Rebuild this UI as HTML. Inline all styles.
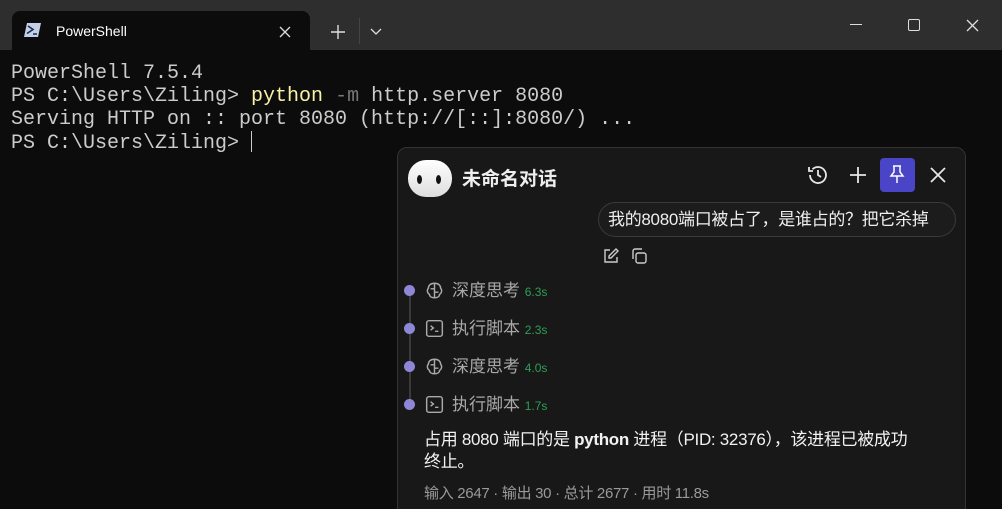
<!DOCTYPE html>
<html><head><meta charset="utf-8"><style>
*{margin:0;padding:0;box-sizing:border-box}
html,body{width:1002px;height:509px;overflow:hidden}
body{background:#0c0c0c;position:relative;font-family:"Liberation Sans","Noto Sans CJK SC",sans-serif}
.bar{position:absolute;left:0;top:0;width:1002px;height:50px;background:#2e2e2e}
.tab{position:absolute;left:12px;top:11px;width:298px;height:40px;background:#0c0c0c;border-radius:8px 8px 0 0}
.tab .t{position:absolute;left:44px;top:12px;color:#fff;font-size:14px}
.term{position:absolute;left:11px;top:62px;font-family:"Liberation Mono",monospace;font-size:20px;line-height:23px;color:#cccccc;white-space:pre}
.y{color:#f9f1a5}.g{color:#767676}
.panel{position:absolute;left:397px;top:147px;width:569px;height:372px;background:#181818;border:1px solid #333;border-radius:10px}
.abs{position:absolute}
.step{position:absolute;left:0;height:20px;color:#a8a8a8;font-size:17px}
.dot{position:absolute;left:6px;width:11px;height:11px;border-radius:50%;background:#8e87d8}
.sec{color:#2f9e55;font-size:12px}
</style></head><body>
<div class="bar"></div>
<div class="tab">
<svg class="abs" style="left:12px;top:11px" width="18" height="16" viewBox="0 0 18 16"><path d="M3 1h14l-3 14H0z" fill="#c4d0e6"/><path d="M4 4l5 3.5-6 4M9 12h4" stroke="#1a2a50" stroke-width="1.6" fill="none"/></svg>
<span class="t">PowerShell</span>
<svg class="abs" style="left:267px;top:15px" width="12" height="12"><path d="M1 1l10 10M11 1L1 11" stroke="#ddd" stroke-width="1.3"/></svg>
</div>
<svg class="abs" style="left:331px;top:25px" width="14" height="14"><path d="M7 0v14M0 7h14" stroke="#ddd" stroke-width="1.4"/></svg>
<div class="abs" style="left:359px;top:18px;width:1px;height:26px;background:#444"></div>
<svg class="abs" style="left:370px;top:28px" width="12" height="8"><path d="M1 1l5 5 5-5" stroke="#ddd" stroke-width="1.3" fill="none"/></svg>
<div class="abs" style="left:850px;top:24px;width:12px;height:1px;background:#ddd"></div>
<div class="abs" style="left:908px;top:19px;width:12px;height:12px;border:1.3px solid #ddd;border-radius:2px"></div>
<svg class="abs" style="left:966px;top:19px" width="13" height="13"><path d="M1 1l11 11M12 1L1 12" stroke="#ddd" stroke-width="1.3"/></svg>
<div class="term">PowerShell 7.5.4
PS C:\Users\Ziling&gt; <span class="y">python</span> <span class="g">-m</span> http.server 8080
Serving HTTP on :: port 8080 (http://[::]:8080/) ...
PS C:\Users\Ziling&gt; <span style="display:inline-block;width:1px;height:21px;background:#ccc;vertical-align:-4px"></span></div>

<div class="panel">
<div class="abs" style="left:10px;top:12px;width:44px;height:37px;border-radius:18px;background:linear-gradient(#fff,#ddd)"></div>
<div class="abs" style="left:19px;top:27px;width:5px;height:9px;border-radius:50%;background:#111"></div>
<div class="abs" style="left:38px;top:27px;width:5px;height:9px;border-radius:50%;background:#111"></div>
<div class="abs" style="left:64px;top:16px;color:#eee;font-size:19px;font-weight:bold">未命名对话</div>
<svg class="abs" style="left:409px;top:16px" width="22" height="22" viewBox="0 0 22 22" fill="none" stroke="#e6e6e6" stroke-width="1.8"><path d="M3 11a8 8 0 1 0 2.5-5.8"/><path d="M2 3v4h4"/><path d="M11 6v5l3 2"/></svg>
<svg class="abs" style="left:451px;top:18px" width="18" height="18"><path d="M9 1v16M1 9h16" stroke="#e6e6e6" stroke-width="1.8"/></svg>
<div class="abs" style="left:482px;top:10px;width:35px;height:34px;border-radius:4px;background:#4a44c6"></div>
<svg class="abs" style="left:490px;top:16px" width="18" height="22" viewBox="0 0 18 22" fill="none" stroke="#fff" stroke-width="1.5"><path d="M5 2h8M6 2v6l-3 4h12l-3-4V2M9 12v7"/></svg>
<svg class="abs" style="left:532px;top:19px" width="16" height="16"><path d="M1 1l14 14M15 1L1 15" stroke="#e6e6e6" stroke-width="1.8"/></svg>
<div class="abs" style="left:200px;top:54px;width:358px;height:35px;border:1px solid #3a3a3a;border-radius:18px;background:#1c1c1c;color:#eee;font-size:17px;line-height:33px;padding-left:9px;white-space:nowrap;letter-spacing:-0.3px">我的8080端口被占了，是谁占的？把它杀掉</div>
<svg class="abs" style="left:204px;top:99px" width="18" height="18" viewBox="0 0 18 18" fill="none" stroke="#ccc" stroke-width="1.4"><path d="M8 3H3v12h12v-5"/><path d="M14 2l2 2-7 7H7V9z"/></svg>
<svg class="abs" style="left:232px;top:99px" width="18" height="18" viewBox="0 0 18 18" fill="none" stroke="#ccc" stroke-width="1.4"><rect x="6" y="6" width="10" height="10" rx="2"/><path d="M3 12V4a2 2 0 0 1 2-2h7"/></svg>
<div class="abs" style="left:11px;top:143px;width:2px;height:115px;background:#3a3a3a"></div>
<div class="dot" style="top:137px"></div>
<div class="dot" style="top:175px"></div>
<div class="dot" style="top:213px"></div>
<div class="dot" style="top:251px"></div>
<svg class="abs" style="left:27px;top:133px" width="19" height="19" viewBox="0 0 17 17" fill="none" stroke="#aaa" stroke-width="1.3"><path d="M8.5 2C5 2 3 4 3 6.5 1.5 8 2 11 4 12c0 2 2 3 4.5 3s4.5-1 4.5-3c2-1 2.5-4 1-5.5C14 4 12 2 8.5 2zM8.5 2v13M5 7h3.5M9 10h3"/></svg>
<svg class="abs" style="left:27px;top:171px" width="19" height="19" viewBox="0 0 17 17" fill="none" stroke="#aaa" stroke-width="1.3"><rect x="1.5" y="1.5" width="14" height="14" rx="2"/><path d="M5 6l2.5 2L5 10M9 11h3"/></svg>
<svg class="abs" style="left:27px;top:209px" width="19" height="19" viewBox="0 0 17 17" fill="none" stroke="#aaa" stroke-width="1.3"><path d="M8.5 2C5 2 3 4 3 6.5 1.5 8 2 11 4 12c0 2 2 3 4.5 3s4.5-1 4.5-3c2-1 2.5-4 1-5.5C14 4 12 2 8.5 2zM8.5 2v13M5 7h3.5M9 10h3"/></svg>
<svg class="abs" style="left:27px;top:247px" width="19" height="19" viewBox="0 0 17 17" fill="none" stroke="#aaa" stroke-width="1.3"><rect x="1.5" y="1.5" width="14" height="14" rx="2"/><path d="M5 6l2.5 2L5 10M9 11h3"/></svg>
<div class="step" style="left:54px;top:128px">深度思考 <span class="sec">6.3s</span></div>
<div class="step" style="left:54px;top:166px">执行脚本 <span class="sec">2.3s</span></div>
<div class="step" style="left:54px;top:204px">深度思考 <span class="sec">4.0s</span></div>
<div class="step" style="left:54px;top:242px">执行脚本 <span class="sec">1.7s</span></div>
<div class="abs" style="left:26px;top:281px;width:498px;color:#f2f2f2;font-size:17px;line-height:22px;letter-spacing:-0.3px">占用 8080 端口的是 <b>python</b> 进程（PID: 32376），该进程已被成功终止。</div>
<div class="abs" style="left:26px;top:334px;color:#9a9a9a;font-size:15px;letter-spacing:-0.3px">输入 2647 · 输出 30 · 总计 2677 · 用时 11.8s</div>
</div>
</body></html>
